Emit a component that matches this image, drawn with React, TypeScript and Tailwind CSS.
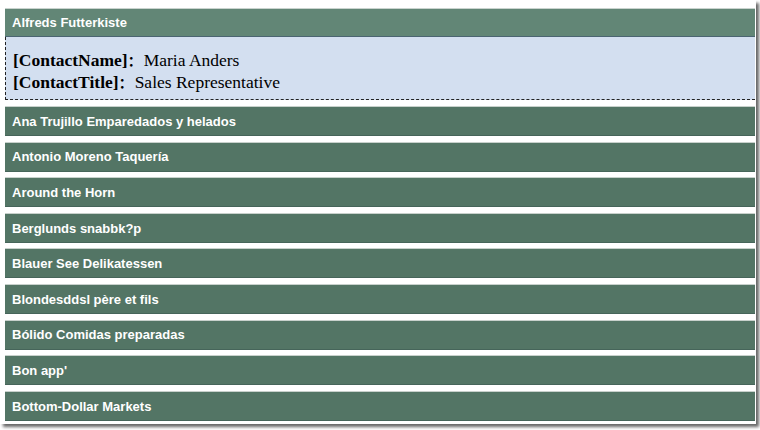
import React from "react";

const customers = [
  "Ana Trujillo Emparedados y helados",
  "Antonio Moreno Taquería",
  "Around the Horn",
  "Berglunds snabbk?p",
  "Blauer See Delikatessen",
  "Blondesddsl père et fils",
  "Bólido Comidas preparadas",
  "Bon app'",
  "Bottom-Dollar Markets",
];

const sans = { fontFamily: '"Liberation Sans", Arial, sans-serif' };
const serif = { fontFamily: '"Liberation Serif", "Noto Sans CJK SC", serif' };

export default function App() {
  return (
    <div className="w-[760px] h-[430px] bg-white">
      <div className="w-[756px] h-[424px] bg-white shadow-[3px_3px_3px_rgba(0,0,0,0.6)] pl-[5px] pr-[1px] pt-[8px]">
        {/* Selected customer */}
        <div
          className="h-[29px] bg-[#628676] border-t border-[#c9d3ce] border-b border-b-[#4b6572] flex items-center pl-[7px] text-white text-[13px] font-bold"
          style={sans}
        >
          Alfreds Futterkiste
        </div>
        <div
          className="h-[63px] bg-[#d3dff0] border-l border-b border-dashed border-[#222] pl-[7px] pt-[12px] text-[17.5px] leading-[22px] text-black"
          style={serif}
        >
          <div className="h-[22px]">
            <span className="font-bold">[ContactName]</span>
            <span className="font-bold text-[14px] leading-none">：</span>
            <span className="ml-[2px]">Maria Anders</span>
          </div>
          <div className="h-[22px]">
            <span className="font-bold">[ContactTitle]</span>
            <span className="font-bold text-[14px] leading-none">：</span>
            <span className="ml-[2px]">Sales Representative</span>
          </div>
        </div>

        {/* Other customers */}
        <div className="flex flex-col gap-[5.6px] mt-[6px]">
          {customers.map((name) => (
            <div
              key={name}
              className="h-[30px] bg-[#537565] border-t border-[#c8d1cc] border-b border-b-[#46655a] flex items-center pl-[7px] pt-px text-white text-[13px] font-bold"
              style={sans}
            >
              {name}
            </div>
          ))}
        </div>
      </div>
    </div>
  );
}
